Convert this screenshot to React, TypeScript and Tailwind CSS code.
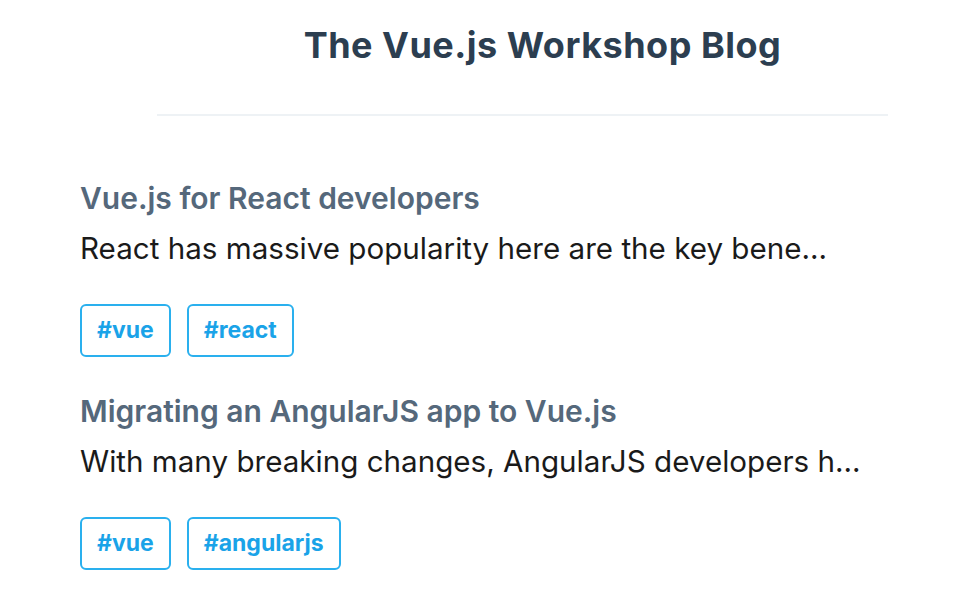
const FONT = { fontFamily: "Inter, 'Liberation Sans', sans-serif" };

const posts = [
  {
    title: "Vue.js for React developers",
    description: "React has massive popularity here are the key bene...",
    tags: ["vue", "react"],
  },
  {
    title: "Migrating an AngularJS app to Vue.js",
    description: "With many breaking changes, AngularJS developers h...",
    tags: ["vue", "angularjs"],
  },
];

export default function App() {
  return (
    <div className="w-[971px] h-[595px] bg-white overflow-hidden" style={FONT}>
      <header className="pl-[114px] pt-[23px]">
        <h1 className="text-center text-[36px] leading-[44px] tracking-[0.5px] font-bold text-[#2c3e50]">
          The Vue.js Workshop Blog
        </h1>
      </header>
      <hr className="ml-[157px] mr-[83px] mt-[47px] border-t-2 border-[#eef2f5]" />

      <main className="pl-[80px] pt-[64px] flex flex-col gap-[36px]">
        {posts.map((post) => (
          <article key={post.title}>
            <h2 className="text-[30px] leading-[36px] font-semibold text-[#55687b]">{post.title}</h2>
            <p className="mt-[14px] text-[29.6px] leading-[36px] text-[#1a1a1a]">{post.description}</p>
            <div className="mt-[38px] flex gap-[16px]">
              {post.tags.map((tag) => (
                <span
                  key={tag}
                  className="h-[53px] px-[15px] flex items-center rounded-[6px] border-2 border-[#2ab0ee] text-[23px] font-bold text-[#1aa3e8]"
                >
                  #{tag}
                </span>
              ))}
            </div>
          </article>
        ))}
      </main>
    </div>
  );
}
